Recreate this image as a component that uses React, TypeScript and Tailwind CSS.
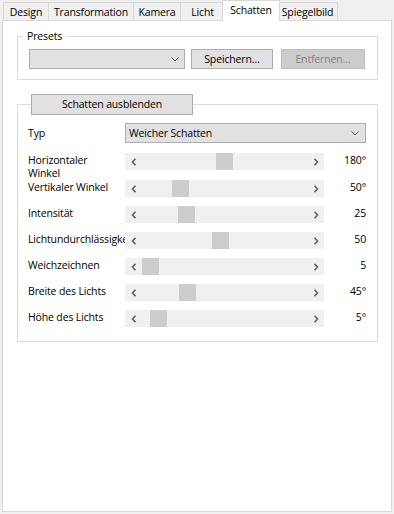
import React from "react";

const tabs = [
    { name: "Design", w: "w-[46px]" },
    { name: "Transformation", w: "w-[86px]" },
    { name: "Kamera", w: "w-[48px]" },
    { name: "Licht", w: "w-[45px]" },
    { name: "Schatten", w: "w-[58px]", active: true },
    { name: "Spiegelbild", w: "w-[61px]" },
];

const rows = [
    { label: "Horizontaler Winkel", value: "180°", pos: 74 },
    { label: "Vertikaler Winkel", value: "50°", pos: 30 },
    { label: "Intensität", value: "25", pos: 36 },
    { label: "Lichtundurchlässigkeit", value: "50", pos: 70 },
    { label: "Weichzeichnen", value: "5", pos: 0 },
    { label: "Breite des Lichts", value: "45°", pos: 37 },
    { label: "Höhe des Lichts", value: "5°", pos: 8 },
];

function Chevron() {
    return (
        <svg width="8" height="5" viewBox="0 0 8 5" className="shrink-0">
            <polyline points="0.5,0.5 4,4 7.5,0.5" fill="none" stroke="#606060" strokeWidth="1" />
        </svg>
    );
}

function Arrow({ dir }: { dir: "left" | "right" }) {
    return (
        <div className="w-[17px] h-[17px] flex items-center justify-center shrink-0">
            <svg width="6" height="8" viewBox="0 0 6 8">
                {dir === "left" ? (
                    <polyline points="4.5,0.8 1.5,4 4.5,7.2" fill="none" stroke="#606060" strokeWidth="1.6" />
                ) : (
                    <polyline points="1.5,0.8 4.5,4 1.5,7.2" fill="none" stroke="#606060" strokeWidth="1.6" />
                )}
            </svg>
        </div>
    );
}

function ScrollBar({ pos }: { pos: number }) {
    return (
        <div className="w-[199px] h-[17px] bg-[#f0f0f0] flex shrink-0">
            <Arrow dir="left" />
            <div className="flex-1 flex">
                <div className="w-[17px] h-[17px] bg-[#cdcdcd]" style={{ marginLeft: pos }} />
            </div>
            <Arrow dir="right" />
        </div>
    );
}

export default function App(): JSX.Element {
    return (
        <div
            className="w-[394px] h-[514px] bg-[#f0f0f0] text-[10.5px] tracking-[-0.15px] leading-[15px] text-black"
            style={{ fontFamily: '"Segoe UI", "Open Sans", sans-serif' }}
        >
            <div className="flex items-end h-[20px] pl-[3px]">
                {tabs.map((t) =>
                    t.active ? (
                        <div
                            key={t.name}
                            className={`${t.w} h-[21px] -ml-[3px] -mr-[2px] -mb-px relative z-10 bg-white border border-b-0 border-[#d9d9d9] flex justify-center pt-[2px] whitespace-nowrap`}
                        >
                            {t.name}
                        </div>
                    ) : (
                        <div
                            key={t.name}
                            className={`${t.w} h-[18px] -ml-px first:ml-0 bg-[#f0f0f0] border border-b-0 border-[#d9d9d9] flex justify-center pt-[2px] whitespace-nowrap`}
                        >
                            {t.name}
                        </div>
                    )
                )}
            </div>
            <div className="mx-[2px] h-[492px] bg-white border border-[#d9d9d9] pt-[8px] px-[14px]">
                <fieldset className="border border-[#dcdcdc] px-[11px] pb-[10px] pt-[5px] w-[361px]">
                    <legend className="-ml-[6px] px-[4px]">Presets</legend>
                    <div className="flex items-center">
                        <div className="w-[156px] h-[20px] bg-[#e1e1e1] border border-[#adadad] flex items-center justify-end pr-[5px]">
                            <Chevron />
                        </div>
                        <button className="ml-[6px] w-[82px] h-[20px] bg-[#e1e1e1] border border-[#adadad] flex items-center justify-center">
                            Speichern…
                        </button>
                        <button
                            disabled
                            className="ml-[8px] w-[84px] h-[20px] bg-[#cccccc] border border-[#bfbfbf] text-[#838383] flex items-center justify-center"
                        >
                            Entfernen…
                        </button>
                    </div>
                </fieldset>

                <fieldset className="mt-[14px] border border-[#dcdcdc] px-[10px] pb-[5px] pt-[8px] w-[361px]">
                    <legend className="ml-[3px]">
                        <button className="w-[162px] h-[21px] bg-[#e1e1e1] border border-[#adadad] flex items-center justify-center">
                            Schatten ausblenden
                        </button>
                    </legend>
                    <div className="flex items-center h-[20px]">
                        <div className="w-[97px]">Typ</div>
                        <div className="w-[241px] h-[20px] bg-[#e1e1e1] border border-[#adadad] flex items-center justify-between pl-[3px] pr-[6px]">
                            <span>Weicher Schatten</span>
                            <Chevron />
                        </div>
                    </div>
                    <div className="mt-[10px] flex flex-col">
                        {rows.map((r, i) => (
                            <div key={r.label} className={`flex items-start ${i === 0 ? "h-[27px]" : "h-[26px]"}`}>
                                <div className="w-[97px] pr-[1px] overflow-hidden leading-[13px] pt-[1px]">
                                    <div className={i === 0 ? "" : "whitespace-nowrap"}>
                                        {i === 0 ? (
                                            <>
                                                Horizontaler
                                                <br />
                                                Winkel
                                            </>
                                        ) : (
                                            r.label
                                        )}
                                    </div>
                                </div>
                                <ScrollBar pos={r.pos} />
                                <div className="w-[42px] text-right leading-[13px] pt-[1px]">{r.value}</div>
                            </div>
                        ))}
                    </div>
                </fieldset>
            </div>
        </div>
    );
}
